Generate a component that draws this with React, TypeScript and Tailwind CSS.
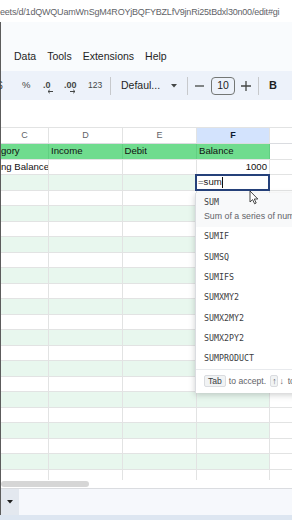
import React from "react";

const GREEN = "bg-[#6fdc8e]";
const LIGHT = "bg-[#e8f7ee]";

function Row({ i }: { i: number }) {
  const header = i === 0;
  const bg = header ? GREEN : i % 2 === 0 ? LIGHT : "bg-white";
  const bcol = header ? "border-[#62cf82]" : "border-[#e2e3e3]";
  const cell = `h-full border-r ${bcol} ${bg} flex items-center overflow-hidden whitespace-nowrap`;
  let c = "", d = "", e = "", f: React.ReactNode = null;
  if (i === 0) {
    c = "gory";
    d = "Income";
    e = "Debit";
    f = <span className="pl-[2px]">Balance</span>;
  } else if (i === 1) {
    c = "ng Balance";
    f = <span className="ml-auto pr-[2px]">1000</span>;
  }
  return (
    <div className="flex h-[15.5px] border-b border-[#e2e3e3] text-[9.6px] text-[#111]">
      <div className={`${cell} w-[48px]`}>
        <span>{c}</span>
      </div>
      <div className={`${cell} w-[74px]`}>
        <span className="pl-[2px]">{d}</span>
      </div>
      <div className={`${cell} w-[74px]`}>
        <span className="pl-[1.5px]">{e}</span>
      </div>
      <div className={`${cell} w-[73px] relative overflow-visible`}>
        {f}
        {i === 2 && (
          <div className="absolute left-[-2px] top-[-1px] w-[75px] h-[17px] border-2 border-[#25417a] bg-white flex items-center pl-[1px] text-[9.6px]">
            <span className="text-[#555]">=</span>
            <span className="text-[#222]">sum</span>
            <span className="inline-block w-[1px] h-[11px] bg-[#111] ml-[0.5px]" />
          </div>
        )}
      </div>
      <div className="h-full flex-1 bg-white" />
    </div>
  );
}

function Sep() {
  return <div className="w-[1px] h-[18px] bg-[#c7c9cc]" />;
}

export default function App() {
  const items = ["SUMIF", "SUMSQ", "SUMIFS", "SUMXMY2", "SUMX2MY2", "SUMX2PY2", "SUMPRODUCT"];
  return (
    <div className="w-[292px] h-[520px] overflow-hidden bg-white relative font-['Liberation_Sans',Arial,sans-serif]">
      {/* URL bar */}
      <div className="h-[22px] bg-white flex items-center pt-[3px] overflow-hidden whitespace-nowrap text-[9px] tracking-[-0.2px] text-[#5f6368]">
        eets/d/1dQWQUamWnSgM4ROYjBQFYBZLfV9jnRi25tBdxl30n00/edit#gi
      </div>

      {/* main window */}
      <div className="h-[493px] border-l border-[#5c5c5c] flex flex-col">
        {/* chrome */}
        <div className="bg-[#f9fbfd] h-[78px] flex flex-col">
          <div className="h-[26px]" />
          <div className="h-[18px] flex items-center gap-[11px] pl-[13px] text-[10.5px] text-[#1f1f1f]">
            <span>Data</span>
            <span>Tools</span>
            <span>Extensions</span>
            <span>Help</span>
          </div>
          <div className="h-[5px]" />
          <div className="h-[29px] bg-[#edf2fa] flex items-center text-[#444746] whitespace-nowrap">
            <span className="ml-[-4px] text-[10px] w-[6px]">$</span>
            <span className="ml-[19px] text-[9.5px] w-[9px]">%</span>
            <span className="ml-[11px] w-[14px] h-[14px] relative">
              <svg width="14" height="16" viewBox="0 0 14 16">
                <text x="1" y="9" fontSize="9" fontWeight="bold" fill="#444746" fontFamily="Liberation Sans, Arial">.0</text>
                <path d="M6 12.5 H11 M6 12.5 L7.8 10.8 M6 12.5 L7.8 14.2" stroke="#444746" strokeWidth="1" fill="none" />
              </svg>
            </span>
            <span className="ml-[8px] w-[16px] h-[14px]">
              <svg width="16" height="16" viewBox="0 0 16 16">
                <text x="0" y="9" fontSize="9" fontWeight="bold" fill="#444746" fontFamily="Liberation Sans, Arial">.00</text>
                <path d="M6 12.5 H11 M11 12.5 L9.2 10.8 M11 12.5 L9.2 14.2" stroke="#444746" strokeWidth="1" fill="none" />
              </svg>
            </span>
            <span className="ml-[8px] text-[8.5px] w-[15px]">123</span>
            <span className="ml-[7px]"><Sep /></span>
            <span className="ml-[10px] text-[10.5px] w-[40px] text-[#1f1f1f]">Defaul...</span>
            <span className="ml-[10px] w-[6px] flex items-center">
              <svg width="6" height="4" viewBox="0 0 6 4"><path d="M0 0 H6 L3 3.5 Z" fill="#444746" /></svg>
            </span>
            <span className="ml-[10px]"><Sep /></span>
            <span className="ml-[7px] w-[9px] flex items-center">
              <svg width="9" height="2" viewBox="0 0 9 2"><path d="M0 1 H9" stroke="#444746" strokeWidth="1.3" /></svg>
            </span>
            <span className="ml-[7px] w-[24px] h-[18px] border border-[#747775] rounded-[4px] flex items-center justify-center text-[10.5px] text-[#1f1f1f]">10</span>
            <span className="ml-[6px] w-[10px] flex items-center">
              <svg width="10" height="10" viewBox="0 0 10 10"><path d="M0 5 H10 M5 0 V10" stroke="#444746" strokeWidth="1.3" /></svg>
            </span>
            <span className="ml-[7px]"><Sep /></span>
            <span className="ml-[10px] text-[11px] font-bold text-[#1f1f1f]">B</span>
          </div>
        </div>

        {/* white formula area */}
        <div className="h-[27px] bg-white" />

        {/* grid */}
        <div className="h-[353px] overflow-hidden border-t border-[#e2e3e3] relative">
          <div className="flex h-[16px] border-b border-[#dadce0] text-[9px] text-[#5f6368]">
            <div className="w-[48px] border-r border-[#e2e3e3] flex items-center justify-center pr-[26px] pl-0">
              <span className="ml-[26px]">C</span>
            </div>
            <div className="w-[74px] border-r border-[#e2e3e3] flex items-center justify-center">D</div>
            <div className="w-[74px] border-r border-[#e2e3e3] flex items-center justify-center">E</div>
            <div className="w-[73px] border-r border-[#e2e3e3] bg-[#d3e3fd] flex items-center justify-center font-bold text-[#0b1a33]">F</div>
            <div className="flex-1" />
          </div>
          {Array.from({ length: 22 }).map((_, i) => (
            <Row key={i} i={i} />
          ))}
        </div>

        {/* scrollbar row */}
        <div className="h-[8px] bg-white flex items-center">
          <div className="w-[88px] h-[6px] rounded-full bg-[#d6d6d6]" />
        </div>

        {/* bottom sheet bar */}
        <div className="flex-1 border-t border-[#dadce0] bg-[#f6f8fc] flex">
          <div className="w-[18px] h-full bg-[#e3e8ef] flex items-center justify-center">
            <svg width="6" height="4" viewBox="0 0 6 4"><path d="M0 0 H6 L3 3.5 Z" fill="#1f1f1f" /></svg>
          </div>
        </div>
      </div>
      <div className="h-[5px] bg-[#dde6f1]" />

      {/* autocomplete dropdown */}
      <div className="absolute left-[195px] top-[193px] w-[130px] bg-white border-l border-[#dadce0] shadow-[0_2px_6px_rgba(60,64,67,0.25)] flex flex-col">
        <div className="h-[33.5px] bg-[#f8f9fa] flex flex-col pl-[8px]">
          <div className="mt-[3px] h-[12px] flex items-center font-['DejaVu_Sans_Mono',monospace] text-[8.3px] text-[#3c4043]">SUM</div>
          <div className="mt-[2.7px] h-[12px] flex items-center whitespace-nowrap text-[8.8px] text-[#5f6368]">Sum of a series of numbers and/or cells.</div>
        </div>
        {items.map((t) => (
          <div key={t} className="h-[20.3px] flex items-center pl-[8px] font-['DejaVu_Sans_Mono',monospace] text-[8.3px] text-[#3c4043]">
            {t}
          </div>
        ))}
        <div className="h-[24px] border-t border-[#e8eaed] flex items-center pl-[8px] whitespace-nowrap text-[8.6px] text-[#5f6368]">
          <span className="h-[12px] px-[3px] border border-[#dadce0] bg-[#f1f3f4] rounded-[2px] flex items-center text-[#3c4043]">Tab</span>
          <span className="ml-[3px]">to accept.</span>
          <span className="ml-[4px] h-[12px] px-[1px] border border-[#dadce0] bg-[#f1f3f4] rounded-[2px] flex items-center">↑</span>
          <span className="ml-[1px]">↓</span>
          <span className="ml-[4px]">to navigate</span>
        </div>
      </div>

      {/* mouse pointer */}
      <svg className="absolute left-[249px] top-[190px]" width="10" height="15" viewBox="0 0 10 15">
        <path d="M1 1 L1 12 L3.6 9.6 L5.6 13.8 L7.2 13 L5.3 9 L8.8 9 Z" fill="white" stroke="#333" strokeWidth="0.9" strokeLinejoin="round" />
      </svg>
    </div>
  );
}
